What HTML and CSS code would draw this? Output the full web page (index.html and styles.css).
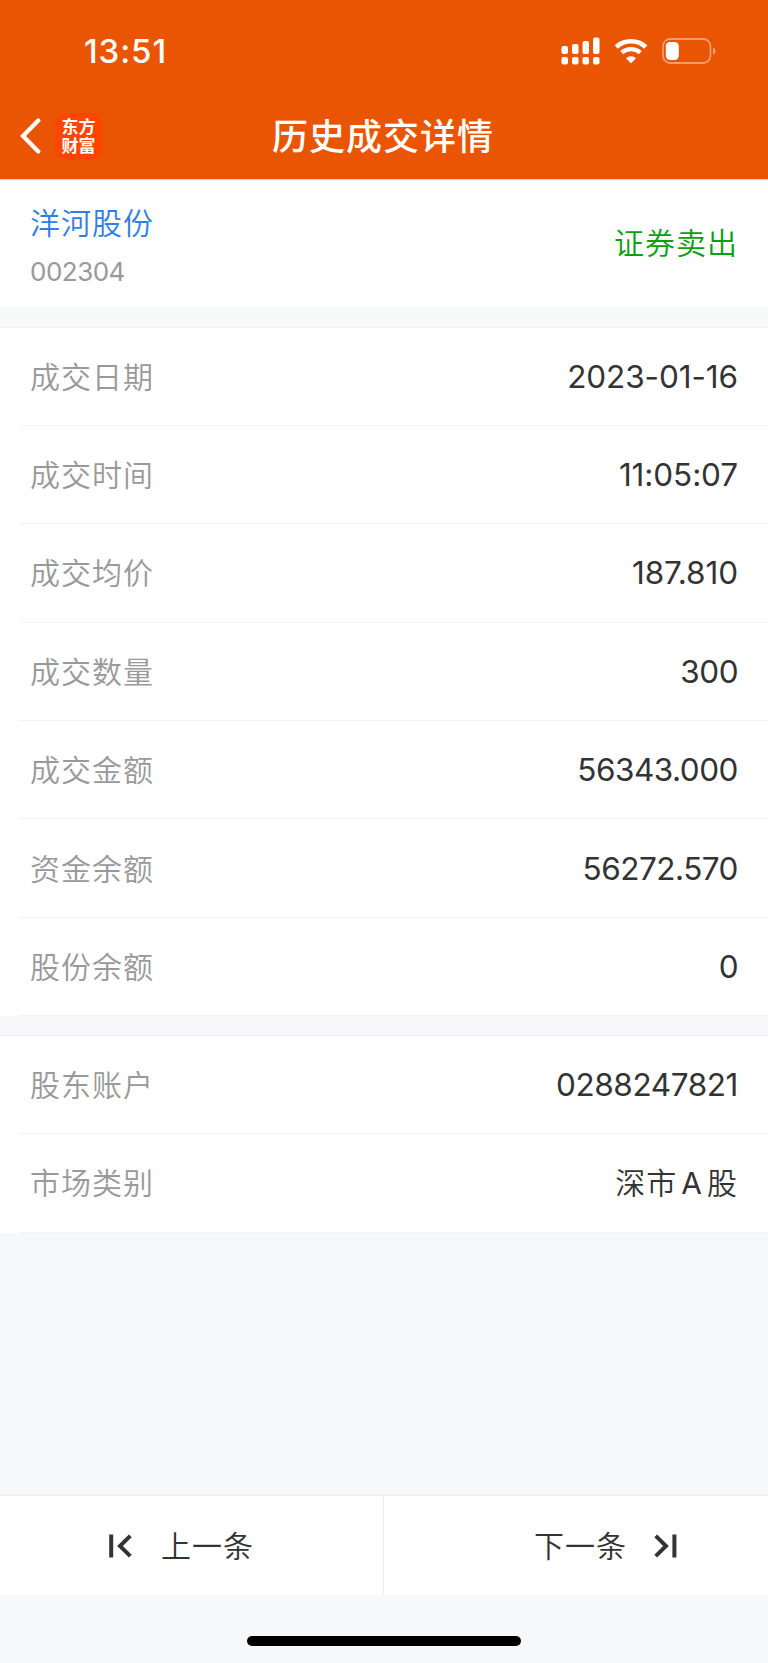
FILE: index.html
```html
<!DOCTYPE html>
<html lang="zh-CN">
<head>
    <meta charset="UTF-8">
    <meta name="viewport" content="width=device-width, initial-scale=1.0">
    <title>历史成交详情</title>
    <link rel="stylesheet" href="styles.css">
</head>
<body>
    <header class="header">
        <div class="status-bar">
            <span class="time">13:51</span>
            <div class="status-icons">
                <svg class="signal" width="39" height="28" viewBox="0 0 39 28" fill="#fff">
                    <rect x="0.5" y="9" width="6.5" height="8" rx="2"/>
                    <rect x="11" y="7" width="6.5" height="10" rx="2"/>
                    <rect x="21.5" y="4" width="6.5" height="13" rx="2"/>
                    <rect x="32" y="0.5" width="6.5" height="16.5" rx="2"/>
                    <rect x="0.5" y="20" width="6.5" height="7.5" rx="2"/>
                    <rect x="11" y="20" width="6.5" height="7.5" rx="2"/>
                    <rect x="21.5" y="20" width="6.5" height="7.5" rx="2"/>
                    <rect x="32" y="20" width="6.5" height="7.5" rx="2"/>
                </svg>
                <svg class="wifi" width="34" height="26" viewBox="0 0 34 26">
                    <path d="M2.2 9 A22 22 0 0 1 31.8 9" fill="none" stroke="#fff" stroke-width="4.6"/>
                    <path d="M7.7 14.7 A14 14 0 0 1 26.3 14.7" fill="none" stroke="#fff" stroke-width="4.3"/>
                    <path d="M17 25.2 L12 20.2 A7.2 7.2 0 0 1 22 20.2 Z" fill="#fff"/>
                </svg>
                <svg class="battery" width="54" height="26" viewBox="0 0 54 26">
                    <rect x="1" y="1" width="47.4" height="24" rx="7" fill="none" stroke="#fff" stroke-opacity="0.42" stroke-width="1.8"/>
                    <rect x="3.8" y="4" width="13" height="18" rx="4.2" fill="#fff"/>
                    <path d="M51 9 Q53.5 10.5 53.5 13 Q53.5 15.5 51 17 Z" fill="#fff" fill-opacity="0.45"/>
                </svg>
            </div>
        </div>
        <div class="nav-bar">
            <svg class="back" width="22" height="36" viewBox="0 0 22 36">
                <path d="M18.3 2.5 L3 18 L18.3 33.5" fill="none" stroke="#fff" stroke-width="4.2" stroke-linecap="round" stroke-linejoin="miter"/>
            </svg>
            <div class="logo">东方财富</div>
            <h1>历史成交详情</h1>
        </div>
    </header>

    <section class="stock">
        <div>
            <div class="stock-name">洋河股份</div>
            <div class="stock-code">002304</div>
        </div>
        <div class="trade-type">证券卖出</div>
    </section>

    <section class="group">
        <div class="row"><span class="label">成交日期</span><span class="value wide">2023-01-16</span></div>
        <div class="row"><span class="label">成交时间</span><span class="value wide">11:05:07</span></div>
        <div class="row"><span class="label">成交均价</span><span class="value wide">187.810</span></div>
        <div class="row"><span class="label">成交数量</span><span class="value">300</span></div>
        <div class="row"><span class="label">成交金额</span><span class="value">56343.000</span></div>
        <div class="row"><span class="label">资金余额</span><span class="value">56272.570</span></div>
        <div class="row"><span class="label">股份余额</span><span class="value">0</span></div>
    </section>

    <section class="group">
        <div class="row"><span class="label">股东账户</span><span class="value account">0288247821</span></div>
        <div class="row"><span class="label">市场类别</span><span class="value text">深市<span class="latin">A</span>股</span></div>
    </section>

    <footer class="footer">
        <div class="pager">
            <div class="prev">
                <svg width="23" height="24" viewBox="0 0 23 24" fill="none" stroke="#333" stroke-width="4">
                    <path d="M2.2 0.5 V23.5"/>
                    <path d="M21.3 1.8 L11 12 L21.3 22.2"/>
                </svg>
                <span>上一条</span>
            </div>
            <div class="next">
                <span>下一条</span>
                <svg width="23" height="24" viewBox="0 0 23 24" fill="none" stroke="#333" stroke-width="4">
                    <path d="M1.7 1.8 L12 12 L1.7 22.2"/>
                    <path d="M20.4 0.5 V23.5"/>
                </svg>
            </div>
        </div>
        <div class="home-indicator"></div>
    </footer>
</body>
</html>
```

FILE: styles.css
```css
* {
    box-sizing: border-box;
}

body {
    margin: 0;
    height: 1663px;
    display: flex;
    flex-direction: column;
    background-color: #f6f8fa;
    color: #333;
    font-family: Inter, "Noto Sans CJK SC", sans-serif;
    font-size: 30px;
    font-weight: 350;
}

.header {
    height: 180px;
    border-bottom: 1px solid #f9ccb2;
    background-color: #ea5504;
    color: #fff;
}

.status-bar {
    height: 102px;
    padding: 0 52px 0 84px;
    display: flex;
    justify-content: space-between;
    align-items: center;
}

.time {
    font-size: 33px;
    font-weight: 550;
    letter-spacing: 0.9px;
    line-height: 40px;
}

.status-icons {
    display: flex;
    align-items: center;
}

.wifi {
    margin-left: 14px;
}

.battery {
    margin-left: 14px;
}

.nav-bar {
    height: 68px;
    padding-left: 20px;
    display: grid;
    grid-template-columns: 35px 217px 1fr;
    align-items: center;
}

.logo {
    width: 47px;
    height: 47px;
    padding: 3px 6px;
    border-radius: 10px;
    background-color: #ff4500;
    font-family: "Noto Sans CJK SC", sans-serif;
    font-size: 17px;
    font-weight: 700;
    line-height: 19px;
    text-align: center;
}

h1 {
    margin: 0 0 5px;
    font-family: "Noto Sans CJK SC", sans-serif;
    font-size: 36px;
    font-weight: 500;
    letter-spacing: 1px;
    line-height: 52px;
}

.stock {
    height: 127px;
    padding: 0 30px;
    display: flex;
    justify-content: space-between;
    align-items: center;
    background-color: #fff;
}

.stock-name {
    padding-top: 2px;
    color: #2f7ee6;
    letter-spacing: 1px;
    line-height: 44px;
}

.stock-code {
    margin-top: 11px;
    color: #999;
    font-size: 26px;
    font-weight: 400;
    letter-spacing: -0.5px;
    line-height: 32px;
}

.trade-type {
    margin-bottom: 6px;
    color: #0aa00a;
    letter-spacing: 1px;
}

.group {
    margin-top: 18.5px;
    border-top: 1px solid #eff0f2;
    background-color: #fff;
}

.stock + .group {
    margin-top: 19.5px;
}

.row {
    height: 98.4px;
    margin-left: 20px;
    padding: 0 30px 0 10px;
    display: flex;
    justify-content: space-between;
    align-items: center;
    border-bottom: 1px solid #f2f3f4;
}

.label {
    margin-bottom: 3px;
    color: #999;
    letter-spacing: 1px;
}

.value {
    font-size: 31.5px;
    font-weight: 400;
    letter-spacing: -0.5px;
}

.value.wide {
    letter-spacing: -0.1px;
}

.value.account {
    letter-spacing: -0.4px;
}

.value.text {
    margin-bottom: 3px;
    font-size: 30px;
    font-weight: 350;
    letter-spacing: 1px;
}

.latin {
    margin: 0 4px;
    font-weight: 400;
}

.footer {
    margin-top: auto;
    height: 168px;
}

.pager {
    height: 100px;
    display: grid;
    grid-template-columns: 1fr 1fr;
    border-top: 1px solid #eceef0;
    background-color: #fff;
}

.prev,
.next {
    display: flex;
    align-items: center;
    letter-spacing: 1px;
}

.prev span,
.next span {
    margin-bottom: 4px;
}

.prev {
    padding-left: 109px;
    gap: 29px;
    border-right: 1px solid #eceef0;
}

.next {
    padding-left: 150px;
    gap: 27px;
}

.home-indicator {
    width: 274px;
    height: 10px;
    margin: 41px auto 0;
    border-radius: 5px;
    background-color: #000;
}
```
